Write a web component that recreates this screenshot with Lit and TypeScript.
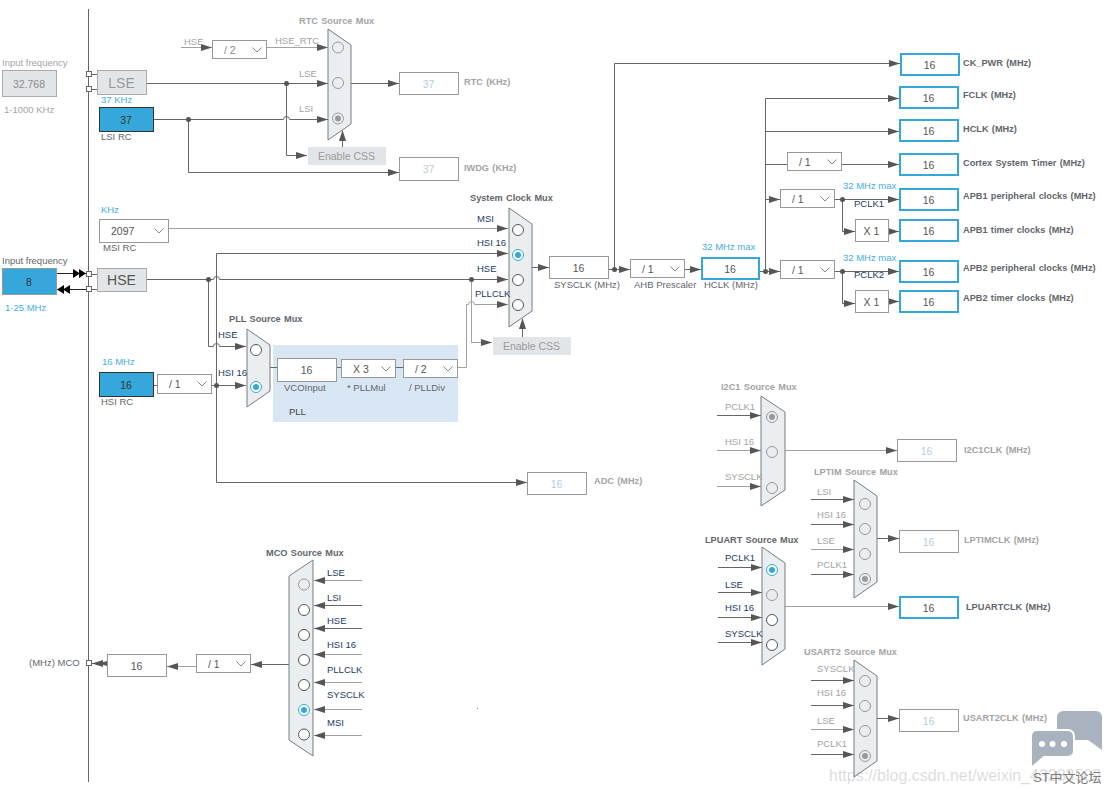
import { LitElement, html, svg, css } from 'lit';
import { customElement } from 'lit/decorators.js';

const D = 'd';
const L = 'l';

// horizontal wire hopping over a vertical one at x
const hop = (x: number) => `H${x - 3} a3 3 0 0 1 6 0`;

type Wire = [string, string];
type Dir = 'r' | 'l' | 'u';
type Arrow = [number, number, Dir?];

const wires: Wire[] = [
  ['M88.5 9V782', D],
  ['M92 74.5H97M92 89.5H97M92 274.5H97M92 289.5H97', D],
  // RTC
  ['M181 47.5H212M267 47.5H328', L],
  ['M147 83.5H328', D],
  ['M286.5 83.5V155.5H307', D],
  [`M154 119.5${hop(286.5)}H328`, D],
  ['M188.5 119.5V172.5H399', D],
  ['M351 83.5H399', D],
  ['M342.5 147V131', D],
  // system clock
  ['M169 228.5H508', L],
  [`M147 279.5${hop(216.5)}H508`, D],
  ['M508 253.5H216.5V482.5H527', D],
  [`M208.5 279.5V346.5${hop(216.5)}H246`, D],
  ['M154 385.5H157M212 385.5H246', D],
  ['M270 367.5H277M337 367.5H341M396 367.5H403', D],
  [`M458 367.5H466.5V304.5${hop(471.5)}H508`, L],
  ['M471.5 279.5V342.5H492', L],
  ['M522.5 337V319', D],
  ['M532 267.5H549', D],
  // bus
  ['M609 269.5H630M685 269.5H701', D],
  ['M614.5 269.5V63.5H900', D],
  ['M760 271.5H780M765.5 271.5V98.5H899M765.5 131.5H899M765.5 164.5H787M842 164.5H899M765.5 199.5H780', D],
  ['M835 199.5H899M842.5 199.5V231.5H855M889 231.5H899', D],
  ['M835 271.5H899M842.5 271.5V303.5H855M889 301.5H899', D],
  // I2C1
  ['M717 415.5H761', D],
  ['M717 450.5H761M717 486.5H761M785 450.5H897', L],
  // LPTIM
  ['M811 499.5H854M811 524.5H854M811 574.5H854M877 538.5H899', D],
  ['M811 549.5H854', L],
  // LPUART
  ['M718 567.5H762M718 592.5H762M718 617.5H762M718 642.5H762', D],
  ['M785 606.5H899', L],
  // USART2
  ['M811 680.5H854M811 705.5H854M811 754.5H854M877 718.5H899', D],
  ['M811 729.5H854', L],
  // MCO
  ['M362 580.5H314M362 654.5H314M362 682.5H314M362 709.5H314M362 735.5H314', L],
  ['M362 605.5H314M362 628.5H314', D],
  ['M289 664.5H251M107 663.5H92', D],
  ['M196 666.5H167', L],
];

const arrows: Arrow[] = [
  [212, 47.5], [328, 47.5], [328, 83.5], [328, 119.5], [307, 155.5], [399, 83.5], [399, 172.5], [342.5, 130, 'u'],
  [508, 228.5], [508, 253.5], [508, 279.5], [508, 304.5], [492, 342.5], [522.5, 318, 'u'], [246, 346.5], [246, 385.5],
  [527, 482.5], [549, 267.5], [630, 269.5], [701, 269.5], [780, 271.5], [900, 63.5], [899, 98.5], [899, 131.5],
  [899, 164.5], [780, 199.5], [899, 199.5], [855, 231.5], [899, 231.5], [899, 271.5], [855, 303.5], [899, 301.5],
  [761, 415.5], [761, 450.5], [761, 486.5], [897, 450.5],
  [854, 499.5], [854, 524.5], [854, 549.5], [854, 574.5], [899, 538.5],
  [762, 567.5], [762, 592.5], [762, 617.5], [762, 642.5], [899, 606.5],
  [854, 680.5], [854, 705.5], [854, 729.5], [854, 754.5], [899, 718.5],
  [314, 580.5, 'l'], [314, 605.5, 'l'], [314, 628.5, 'l'], [314, 654.5, 'l'], [314, 682.5, 'l'], [314, 709.5, 'l'], [314, 735.5, 'l'],
  [251, 664.5, 'l'], [167, 666.5, 'l'], [92, 663.5, 'l'], [99, 663.5, 'l'],
];

const dots = [
  [286.5, 83.5], [188.5, 119.5], [208.5, 279.5], [216.5, 385.5], [471.5, 279.5],
  [614.5, 269.5], [765.5, 271.5], [842.5, 199.5], [842.5, 271.5],
];

// circle states: d dark ring, g grey ring, s blue selected, x grey selected
interface Mux {
  x: number;
  w: number;
  top: number;
  bottom: number;
  cx: number;
  flip?: boolean;
  inputs: [number, string][];
}

const muxes: Mux[] = [
  { x: 328, w: 23, top: 29, bottom: 140, cx: 338, inputs: [[47.5, 'g'], [83, 'g'], [118.5, 'x']] },
  { x: 247, w: 23, top: 329, bottom: 407, cx: 256, inputs: [[350, 'd'], [387, 's']] },
  { x: 509, w: 23, top: 208, bottom: 327, cx: 518, inputs: [[230, 'd'], [255, 's'], [280, 'd'], [305, 'd']] },
  { x: 761, w: 24, top: 396, bottom: 506, cx: 772, inputs: [[417, 'x'], [452, 'g'], [488, 'g']] },
  { x: 854, w: 23, top: 480, bottom: 598, cx: 865, inputs: [[504, 'g'], [529, 'g'], [554, 'g'], [579, 'x']] },
  { x: 762, w: 23, top: 547, bottom: 665, cx: 772, inputs: [[570, 's'], [595, 'g'], [620, 'd'], [645, 'd']] },
  { x: 854, w: 23, top: 660, bottom: 777, cx: 865, inputs: [[681, 'g'], [706, 'g'], [731, 'g'], [756, 'x']] },
  {
    x: 289, w: 24, top: 560, bottom: 756, cx: 304, flip: true,
    inputs: [[584.5, 'g'], [610, 'd'], [635, 'd'], [660, 'd'], [685, 'd'], [710, 's'], [734.5, 'd']],
  },
];

// x, y, w, h, text, variant classes
type Box = [number, number, number, number, string, string];

const boxes: Box[] = [
  [2, 70, 55, 27, '32.768', 'grey'],
  [97, 70, 50, 25, 'LSE', 'grey big dim'],
  [99, 107, 55, 25, '37', 'blue'],
  [212, 40, 55, 19, '/ 2', 'select dim'],
  [399, 72, 60, 23, '37', 'off'],
  [399, 157, 60, 24, '37', 'off'],
  [308, 147, 78, 18, 'Enable CSS', 'css'],
  [99, 219, 70, 24, '2097', 'select'],
  [2, 268, 55, 27, '8', 'blue pale'],
  [97, 268, 50, 24, 'HSE', 'grey big'],
  [99, 372, 55, 25, '16', 'blue'],
  [157, 374, 55, 20, '/ 1', 'select'],
  [277, 358, 60, 24, '16', ''],
  [341, 359, 55, 19, 'X 3', 'select'],
  [403, 359, 55, 19, '/ 2', 'select'],
  [493, 337, 78, 18, 'Enable CSS', 'css'],
  [549, 256, 60, 23, '16', ''],
  [630, 259, 55, 19, '/ 1', 'select'],
  [701, 257, 59, 23, '16', 'out'],
  [787, 152, 55, 19, '/ 1', 'select'],
  [780, 189, 55, 19, '/ 1', 'select'],
  [780, 260, 55, 19, '/ 1', 'select'],
  [855, 219, 34, 23, 'X 1', ''],
  [855, 290, 34, 23, 'X 1', ''],
  [900, 53, 60, 23, '16', 'out'],
  [899, 86, 60, 23, '16', 'out'],
  [899, 119, 60, 23, '16', 'out'],
  [899, 153, 60, 23, '16', 'out'],
  [899, 188, 60, 23, '16', 'out'],
  [899, 219, 60, 23, '16', 'out'],
  [899, 260, 60, 23, '16', 'out'],
  [899, 290, 60, 23, '16', 'out'],
  [527, 472, 60, 23, '16', 'off'],
  [897, 439, 60, 23, '16', 'off'],
  [899, 530, 60, 23, '16', 'off'],
  [899, 596, 60, 23, '16', 'out'],
  [899, 709, 60, 23, '16', 'off'],
  [107, 654, 60, 23, '16', ''],
  [196, 654, 55, 19, '/ 1', 'select'],
];

// x, centre y, text, variant
type Label = [number, number, string, string];

const labels: Label[] = [
  [2, 63, 'Input frequency', 'dim'],
  [4, 110, '1-1000 KHz', 'dim'],
  [101, 100, '37 KHz', 'sky'],
  [101, 137, 'LSI RC', ''],
  [184, 42, 'HSE', 'dim'],
  [275, 41, 'HSE_RTC', 'dim'],
  [299, 74, 'LSE', 'dim'],
  [299, 109, 'LSI', 'dim'],
  [299, 21, 'RTC Source Mux', 'dim title'],
  [464, 82, 'RTC (KHz)', 'dim title'],
  [464, 168, 'IWDG (KHz)', 'dim title'],
  [101, 210, 'KHz', 'sky'],
  [103, 248, 'MSI RC', ''],
  [2, 261, 'Input frequency', ''],
  [5, 308, '1-25 MHz', 'sky'],
  [229, 319, 'PLL Source Mux', 'title'],
  [218, 335, 'HSE', 'navy'],
  [218, 373, 'HSI 16', 'navy'],
  [102, 362, '16 MHz', 'sky'],
  [101, 402, 'HSI RC', ''],
  [284, 388, 'VCOInput', ''],
  [347, 388, '* PLLMul', ''],
  [409, 388, '/ PLLDiv', ''],
  [289, 412, 'PLL', 'plain'],
  [470, 198, 'System Clock Mux', 'title'],
  [477, 219, 'MSI', 'navy'],
  [477, 243, 'HSI 16', 'navy'],
  [477, 269, 'HSE', 'navy'],
  [475, 294, 'PLLCLK', 'navy'],
  [554, 285, 'SYSCLK (MHz)', ''],
  [634, 285, 'AHB Prescaler', ''],
  [702, 247, '32 MHz max', 'sky'],
  [704, 285, 'HCLK (MHz)', ''],
  [843, 186, '32 MHz max', 'sky'],
  [843, 258, '32 MHz max', 'sky'],
  [854, 204, 'PCLK1', 'navy'],
  [854, 275, 'PCLK2', 'navy'],
  [963, 63, 'CK_PWR (MHz)', 'title'],
  [963, 95, 'FCLK (MHz)', 'title'],
  [963, 129, 'HCLK (MHz)', 'title'],
  [963, 163, 'Cortex System Timer (MHz)', 'title'],
  [963, 196, 'APB1 peripheral clocks (MHz)', 'title'],
  [963, 230, 'APB1 timer clocks (MHz)', 'title'],
  [963, 268, 'APB2 peripheral clocks (MHz)', 'title'],
  [963, 298, 'APB2 timer clocks (MHz)', 'title'],
  [594, 481, 'ADC (MHz)', 'dim title'],
  [721, 387, 'I2C1 Source Mux', 'dim title'],
  [725, 407, 'PCLK1', 'dim'],
  [725, 442, 'HSI 16', 'dim'],
  [725, 477, 'SYSCLK', 'dim'],
  [964, 450, 'I2C1CLK (MHz)', 'dim title'],
  [814, 472, 'LPTIM Source Mux', 'dim title'],
  [817, 492, 'LSI', 'dim'],
  [817, 515, 'HSI 16', 'dim'],
  [817, 541, 'LSE', 'dim'],
  [817, 565, 'PCLK1', 'dim'],
  [964, 540, 'LPTIMCLK (MHz)', 'dim title'],
  [705, 540, 'LPUART Source Mux', 'title'],
  [725, 558, 'PCLK1', 'navy'],
  [725, 585, 'LSE', 'navy'],
  [725, 608, 'HSI 16', 'navy'],
  [725, 634, 'SYSCLK', 'navy'],
  [966, 607, 'LPUARTCLK (MHz)', 'title'],
  [804, 652, 'USART2 Source Mux', 'dim title'],
  [817, 669, 'SYSCLK', 'dim'],
  [817, 693, 'HSI 16', 'dim'],
  [817, 721, 'LSE', 'dim'],
  [817, 744, 'PCLK1', 'dim'],
  [963, 718, 'USART2CLK (MHz)', 'dim title'],
  [266, 553, 'MCO Source Mux', 'title'],
  [327, 573, 'LSE', 'navy'],
  [327, 598, 'LSI', 'navy'],
  [327, 621, 'HSE', 'navy'],
  [327, 645, 'HSI 16', 'navy'],
  [327, 670, 'PLLCLK', 'navy'],
  [327, 695, 'SYSCLK', 'navy'],
  [327, 723, 'MSI', 'navy'],
  [29, 663, '(MHz) MCO', ''],
];

const ports = [[86, 71], [86, 86], [86, 271], [86, 286], [86, 660]];

const arrowPath = ([x, y, dir = 'r']: Arrow) => {
  if (dir === 'l') return `M${x} ${y}l11 -3.5v7z`;
  if (dir === 'u') return `M${x} ${y}l-3.5 11h7z`;
  return `M${x} ${y}l-11 -3.5v7z`;
};

@customElement('app-root')
export class AppRoot extends LitElement {
  static styles = css`
    :host {
      display: block;
      position: relative;
      width: 1110px;
      height: 794px;
      overflow: hidden;
      background: #fff;
      font-family: 'Liberation Sans', Arial, sans-serif;
      font-size: 9.5px;
      color: #5c6066;
    }
    .canvas {
      position: absolute;
      inset: 0;
    }
    .wire {
      fill: none;
      stroke: #666;
      stroke-width: 1;
    }
    .wire.l {
      stroke: #a2a2a2;
    }
    .head {
      fill: #565656;
    }
    .black {
      fill: #000;
    }
    .black-wire {
      stroke: #222;
      stroke-width: 1;
    }
    .dot {
      fill: #555;
    }
    .mux {
      fill: #ebeef1;
      stroke: #757c82;
      stroke-width: 1;
    }
    .ring {
      fill: #fff;
      stroke: #555;
      stroke-width: 1;
    }
    .ring.g,
    .ring.x {
      fill: #ebeef1;
      stroke: #999;
    }
    .ring.s {
      stroke: #35a7db;
    }
    .pip {
      fill: #35a7db;
    }
    .pip.x {
      fill: #999;
    }
    .port {
      fill: #fff;
      stroke: #666;
    }
    .pll {
      position: absolute;
      left: 273px;
      top: 345px;
      width: 185px;
      height: 77px;
      background: #d9e6f4;
    }
    .box {
      position: absolute;
      box-sizing: border-box;
      display: flex;
      align-items: center;
      justify-content: center;
      padding-right: 1px;
      background: #fff;
      border: 1px solid #999;
      font-size: 10.5px;
      color: #555;
    }
    .box.grey {
      background: #e3e6e8;
      border-color: #aaa;
      color: #8a8a8a;
    }
    .box.big {
      font-size: 14px;
      color: #555;
    }
    .box.big.dim {
      color: #999;
    }
    .box.blue {
      background: #35a7db;
      border-color: #333;
      color: #333;
    }
    .box.blue.pale {
      border-color: #999;
    }
    .box.out {
      border: 2px solid #35a7db;
    }
    .box.off {
      color: #b9cbe0;
    }
    .box.css {
      background: #e3e6e9;
      border: none;
      color: #999;
    }
    .box.select {
      justify-content: space-between;
      padding: 0 4px 0 11px;
    }
    .box.select.dim {
      color: #888;
    }
    .chevron {
      width: 10px;
      height: 6px;
      fill: none;
      stroke: #888;
    }
    .label {
      position: absolute;
      line-height: 12px;
      white-space: nowrap;
      color: #62666c;
    }
    .label.dim {
      color: #a4a4a4;
    }
    .label.sky {
      color: #45ade0;
    }
    .label.navy {
      color: #1c3b63;
    }
    .label.plain {
      color: #444;
    }
    .label.title {
      font-weight: bold;
      font-size: 9.2px;
      word-spacing: 0.8px;
    }
    .bubble {
      fill: #a9b3c0;
    }
    .bubble.front {
      stroke: #fff;
      stroke-width: 2;
    }
    .bubble-dot {
      fill: #fff;
    }
    .blog {
      position: absolute;
      left: 829px;
      top: 766px;
      font-size: 16px;
      line-height: 20px;
      white-space: nowrap;
      color: rgba(150, 150, 150, 0.34);
    }
    .forum {
      position: absolute;
      left: 1033px;
      top: 770px;
      font-family: 'Liberation Sans', 'Noto Sans CJK SC', sans-serif;
      font-size: 13px;
      line-height: 16px;
      white-space: nowrap;
      color: #7c7c7c;
    }
  `;

  private renderMux(m: Mux) {
    const { x, w, top, bottom } = m;
    const pts = m.flip
      ? `${x},${top + 16} ${x + w},${top} ${x + w},${bottom} ${x},${bottom - 16}`
      : `${x},${top} ${x + w},${top + 16} ${x + w},${bottom - 16} ${x},${bottom}`;
    return svg`
      <polygon class="mux" points=${pts}></polygon>
      ${m.inputs.map(
        ([cy, state]) => svg`
          <circle class="ring ${state}" cx=${m.cx} cy=${cy} r="5.5"></circle>
          ${state === 's' || state === 'x'
            ? svg`<circle class="pip ${state}" cx=${m.cx} cy=${cy} r="3"></circle>`
            : ''}
        `
      )}
    `;
  }

  private renderBox([x, y, w, h, text, cls]: Box) {
    return html`
      <div class="box ${cls}" style="left:${x}px;top:${y}px;width:${w}px;height:${h}px">
        <span>${text}</span>
        ${cls.includes('select')
          ? html`<svg class="chevron" viewBox="0 0 10 6"><path d="M0.5 0.5L5 5L9.5 0.5"></path></svg>`
          : ''}
      </div>
    `;
  }

  protected render() {
    return html`
      <div class="pll"></div>
      <svg class="canvas" width="1110" height="794" viewBox="0 0 1110 794">
        ${wires.map(([d, tone]) => svg`<path class="wire ${tone}" d=${d}></path>`)}
        <path class="black-wire" d="M57 273.5H86M57 289.5H86"></path>
        <path class="black" d="M80 273.5l-7 -4.5v9zM86 273.5l-7 -4.5v9zM57 289.5l7 -4.5v9zM63 289.5l7 -4.5v9z"></path>
        ${arrows.map((a) => svg`<path class="head" d=${arrowPath(a)}></path>`)}
        ${dots.map(([x, y]) => svg`<circle class="dot" cx=${x} cy=${y} r="2.5"></circle>`)}
        ${ports.map(([x, y]) => svg`<rect class="port" x=${x + 0.5} y=${y + 0.5} width="5" height="5"></rect>`)}
        ${muxes.map((m) => this.renderMux(m))}
        <circle class="dot" cx="477.5" cy="708.5" r="0.5"></circle>
      </svg>
      ${boxes.map((b) => this.renderBox(b))}
      ${labels.map(
        ([x, y, text, cls]) => html`<span class="label ${cls}" style="left:${x}px;top:${y - 6}px">${text}</span>`
      )}
      <svg class="canvas" width="1110" height="794" viewBox="0 0 1110 794">
        <path class="bubble" d="M1063 711H1096a6 6 0 0 1 6 6V750L1088 740H1063a6 6 0 0 1 -6 -6V717a6 6 0 0 1 6 -6z"></path>
        <path class="bubble front" d="M1038 730H1068a6 6 0 0 1 6 6V751a6 6 0 0 1 -6 6H1044L1031 768V736a6 6 0 0 1 7 -6z"></path>
        <circle class="bubble-dot" cx="1042" cy="744" r="3"></circle>
        <circle class="bubble-dot" cx="1052.5" cy="744" r="3"></circle>
        <circle class="bubble-dot" cx="1064" cy="744" r="3"></circle>
      </svg>
      <span class="blog">https://blog.csdn.net/weixin_43283509</span>
      <span class="forum">ST中文论坛</span>
    `;
  }
}

declare global {
  interface HTMLElementTagNameMap {
    'app-root': AppRoot;
  }
}
